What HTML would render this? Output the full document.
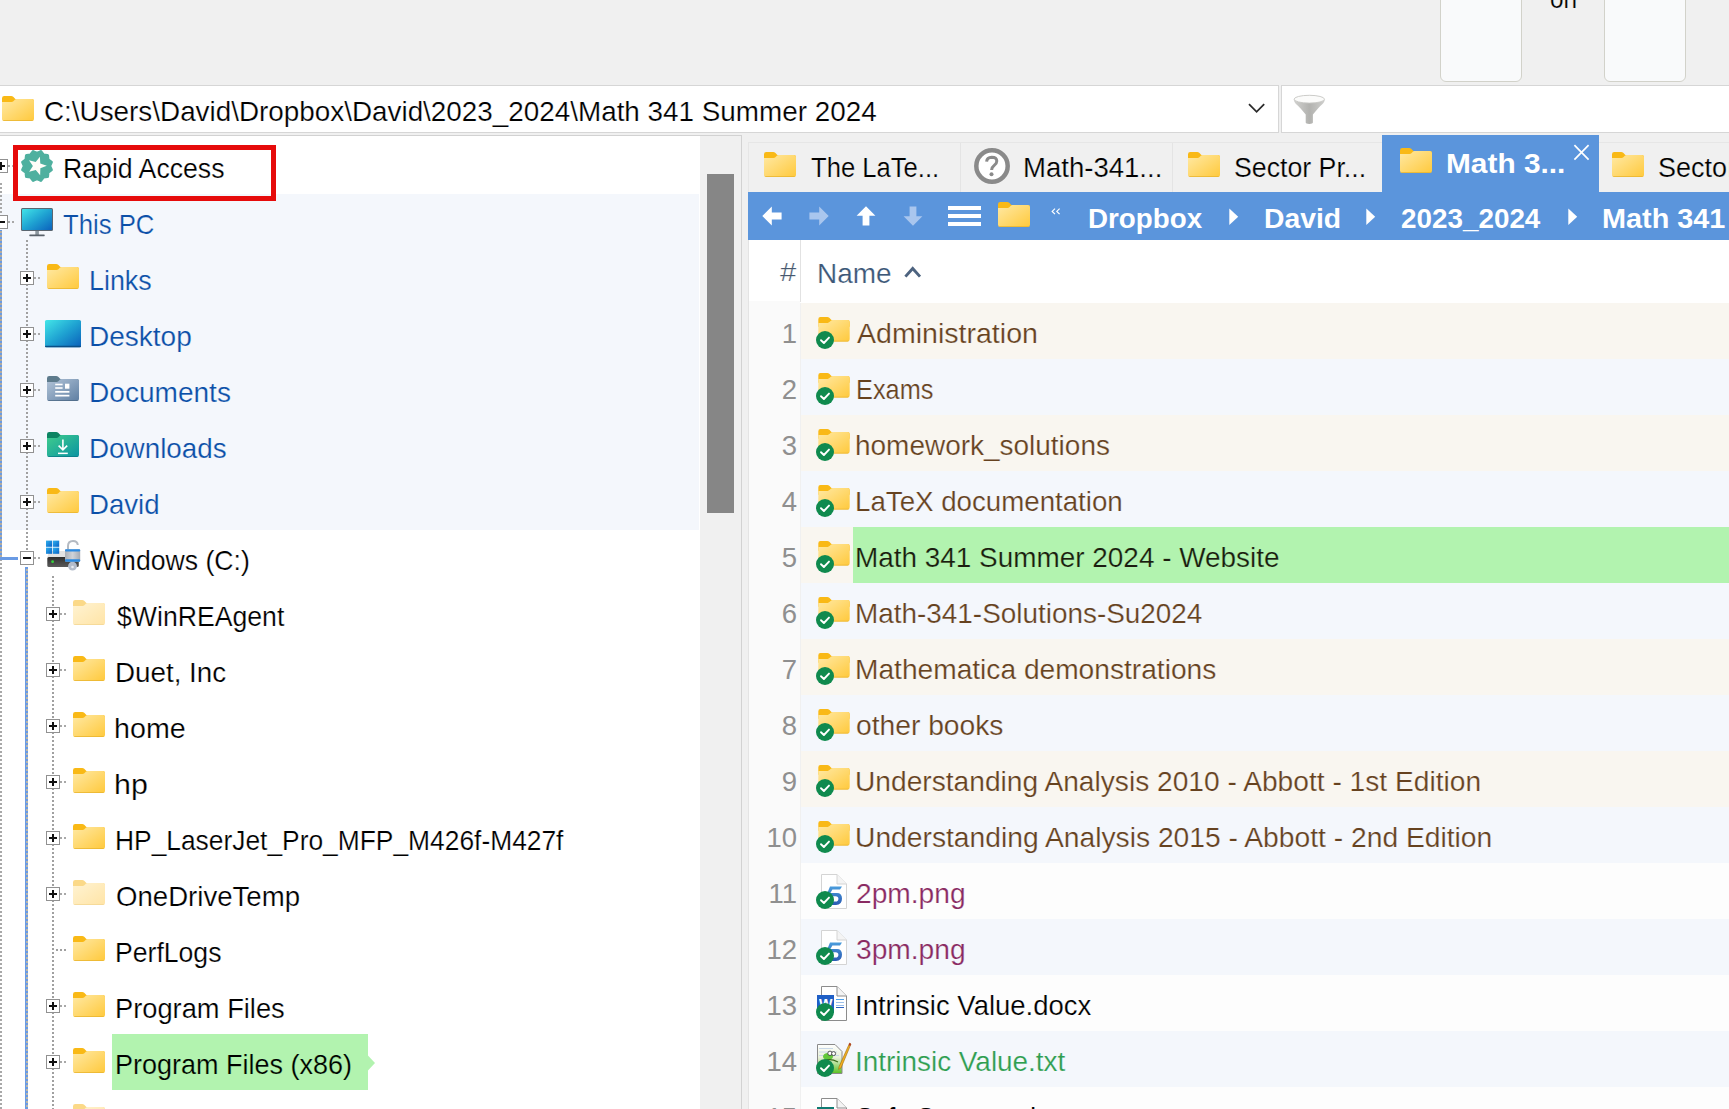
<!DOCTYPE html><html><head><meta charset="utf-8"><title>XYplorer</title><style>
html,body{margin:0;padding:0}body{width:1729px;height:1109px;overflow:hidden;background:#f0f0f0;position:relative;font-family:'Liberation Sans', sans-serif}
.t{position:absolute;white-space:pre;transform-origin:0 0}
#root{position:absolute;left:0;top:0;width:1729px;height:1109px;overflow:hidden}
</style></head><body><div id="root">
<div style="position:absolute;left:1440px;top:-10px;width:80px;height:90px;border:1px solid #d2d2ca;border-radius:6px;background:#f9fafb"></div>
<div style="position:absolute;left:1604px;top:-10px;width:80px;height:90px;border:1px solid #d2d2ca;border-radius:6px;background:#f9fafb"></div>
<div style="position:absolute;left:-1px;top:85px;width:1278px;height:46px;border:1px solid #d6d6d6;background:#fff"></div>
<div style="position:absolute;left:1281px;top:85px;width:500px;height:46px;border:1px solid #d6d6d6;background:#fff"></div>
<svg style="position:absolute;left:2px;top:95.5px" width="32" height="25" viewBox="0 0 32 25"><defs><linearGradient id="fg1" x1="0" y1="0" x2="1" y2="1"><stop offset="0" stop-color="#ffe9a4"/><stop offset="1" stop-color="#ffc93c"/></linearGradient></defs><path d="M0 2.2Q0 0 2.2 0H9.2Q10.4 0 11.2 .8L13.4 3H29.8Q32 3 32 5.2V10H0Z" fill="#f9b916"/><path d="M0 6H9.6Q10.6 6 11.4 5.2L12.8 3.8Q13.6 3 14.6 3H29.8Q32 3 32 5.2V22.8Q32 25 29.8 25H2.2Q0 25 0 22.8Z" fill="url(#fg1)"/><path d="M0.3 23.6Q.8 25 2.2 25H29.8Q31.2 25 31.7 23.6Q31 24.2 29.8 24.2H2.2Q1 24.2 .3 23.6Z" fill="#e9b42e"/></svg>
<svg style="position:absolute;left:1246px;top:101px" width="22" height="14" viewBox="0 0 22 14"><path d="M3 3.2L10.6 10.8L18.2 3.2" fill="none" stroke="#2b2b2b" stroke-width="1.8"/></svg>
<svg style="position:absolute;left:1292px;top:94px" width="34" height="31" viewBox="0 0 34 31"><defs><linearGradient id="fn" x1="0" y1="0" x2="1" y2="0"><stop offset="0" stop-color="#d2d2d0"/><stop offset=".5" stop-color="#b2b2af"/><stop offset="1" stop-color="#cfcfcd"/></linearGradient></defs><path d="M1.8 5.5C1.8 9 5.5 10.8 8.6 14.4L13.7 20.4V28.6Q13.7 30 17.3 30Q20.9 30 20.9 28.6V20.4L26 14.4C29.1 10.8 32.8 9 32.8 5.5Z" fill="url(#fn)"/><ellipse cx="17.3" cy="5.2" rx="15.2" ry="3.9" fill="#fbfbfa" stroke="#c6c6c3" stroke-width=".9"/></svg>
<div style="position:absolute;left:0px;top:135px;width:742px;height:1px;background:#d2d2d2;"></div>
<div style="position:absolute;left:741px;top:135px;width:1px;height:980px;background:#d2d2d2;"></div>
<div style="position:absolute;left:0px;top:136px;width:700px;height:980px;background:#fff;"></div>
<div style="position:absolute;left:0px;top:194px;width:699px;height:336px;background:#f4f7fc;"></div>
<div style="position:absolute;left:707px;top:174px;width:27px;height:339px;background:#868686;"></div>
<div style="position:absolute;left:0px;top:183px;width:2px;height:926px;background:repeating-linear-gradient(to bottom,#a8a8a8 0,#a8a8a8 2px,transparent 2px,transparent 4px)"></div>
<div style="position:absolute;left:0px;top:230px;width:2px;height:330px;background:#6a9be4;"></div>
<div style="position:absolute;left:0px;top:231px;width:2px;height:326px;background:repeating-linear-gradient(to bottom,#b4ab9c 0,#b4ab9c 2px,transparent 2px,transparent 4px)"></div>
<div style="position:absolute;left:0px;top:557px;width:18px;height:3px;background:#6a9be4;"></div>
<div style="position:absolute;left:26px;top:240px;width:2px;height:311px;background:repeating-linear-gradient(to bottom,#a0a0a0 0,#a0a0a0 2px,transparent 2px,transparent 4px)"></div>
<div style="position:absolute;left:25px;top:567px;width:3px;height:560px;background:#6a9be4;"></div>
<div style="position:absolute;left:26px;top:569px;width:2px;height:540px;background:repeating-linear-gradient(to bottom,#bcb6a8 0,#bcb6a8 2px,transparent 2px,transparent 4px)"></div>
<div style="position:absolute;left:52px;top:576px;width:2px;height:533px;background:repeating-linear-gradient(to bottom,#a0a0a0 0,#a0a0a0 2px,transparent 2px,transparent 4px)"></div>
<div style="position:absolute;left:13px;top:145px;width:253px;height:46px;border:5px solid #e60b0b"></div>
<div style="position:absolute;left:-6px;top:159px;width:12px;height:12px;border:1px solid #919191;background:#fff"></div>
<div style="position:absolute;left:-3px;top:165px;width:8px;height:2px;background:#111;"></div>
<div style="position:absolute;left:0px;top:162px;width:2px;height:8px;background:#111;"></div>
<div style="position:absolute;left:8px;top:165px;width:1.8px;height:2px;background:#a8a8a8;"></div>
<div style="position:absolute;left:12px;top:165px;width:1px;height:2px;background:#b8b8b8;"></div>
<svg style="position:absolute;left:19px;top:148px" width="36" height="36" viewBox="0 0 36 36"><polygon points="21.86,3.61 24.35,7.00 28.54,7.46 29.00,11.65 32.39,14.14 30.70,18.00 32.39,21.86 29.00,24.35 28.54,28.54 24.35,29.00 21.86,32.39 18.00,30.70 14.14,32.39 11.65,29.00 7.46,28.54 7.00,24.35 3.61,21.86 5.30,18.00 3.61,14.14 7.00,11.65 7.46,7.46 11.65,7.00 14.14,3.61 18.00,5.30" fill="#4fb09f" stroke="#4fb09f" stroke-width="3" stroke-linejoin="round"/><polygon points="20.90,8.64 21.28,15.54 27.80,17.86 21.35,20.36 21.16,27.28 16.79,21.92 10.15,23.87 13.90,18.06 9.99,12.35 16.68,14.12" fill="#fffdf8"/></svg>
<div style="position:absolute;left:-6px;top:215px;width:12px;height:12px;border:1px solid #919191;background:#fff"></div>
<div style="position:absolute;left:-3px;top:221px;width:8px;height:2px;background:#111;"></div>
<div style="position:absolute;left:8px;top:221px;width:1.8px;height:2px;background:#a8a8a8;"></div>
<div style="position:absolute;left:12px;top:221px;width:1.8px;height:2px;background:#a8a8a8;"></div>
<svg style="position:absolute;left:20px;top:207px" width="34" height="30" viewBox="0 0 34 30"><defs><linearGradient id="pc" x1="0" y1="0" x2="1" y2="1"><stop offset="0" stop-color="#42e4e8"/><stop offset=".5" stop-color="#1fa3d2"/><stop offset="1" stop-color="#0b62bd"/></linearGradient></defs><rect x="1" y="1" width="32" height="23" rx="1.5" fill="#5b6670"/><rect x="2" y="2" width="30" height="21" rx=".8" fill="url(#pc)"/><rect x="15.3" y="24" width="3.6" height="4" fill="#8d979f"/><rect x="9.3" y="27.6" width="15.4" height="1.6" rx=".6" fill="#59626b"/></svg>
<div style="position:absolute;left:20px;top:271px;width:12px;height:12px;border:1px solid #919191;background:#fff"></div>
<div style="position:absolute;left:23px;top:277px;width:8px;height:2px;background:#111;"></div>
<div style="position:absolute;left:26px;top:274px;width:2px;height:8px;background:#111;"></div>
<div style="position:absolute;left:34.3px;top:277px;width:1.7px;height:2px;background:#a8a8a8;"></div>
<div style="position:absolute;left:38px;top:277px;width:1.8px;height:2px;background:#a8a8a8;"></div>
<div style="position:absolute;left:20px;top:327px;width:12px;height:12px;border:1px solid #919191;background:#fff"></div>
<div style="position:absolute;left:23px;top:333px;width:8px;height:2px;background:#111;"></div>
<div style="position:absolute;left:26px;top:330px;width:2px;height:8px;background:#111;"></div>
<div style="position:absolute;left:34.3px;top:333px;width:1.7px;height:2px;background:#a8a8a8;"></div>
<div style="position:absolute;left:38px;top:333px;width:1.8px;height:2px;background:#a8a8a8;"></div>
<div style="position:absolute;left:20px;top:383px;width:12px;height:12px;border:1px solid #919191;background:#fff"></div>
<div style="position:absolute;left:23px;top:389px;width:8px;height:2px;background:#111;"></div>
<div style="position:absolute;left:26px;top:386px;width:2px;height:8px;background:#111;"></div>
<div style="position:absolute;left:34.3px;top:389px;width:1.7px;height:2px;background:#a8a8a8;"></div>
<div style="position:absolute;left:38px;top:389px;width:1.8px;height:2px;background:#a8a8a8;"></div>
<div style="position:absolute;left:20px;top:439px;width:12px;height:12px;border:1px solid #919191;background:#fff"></div>
<div style="position:absolute;left:23px;top:445px;width:8px;height:2px;background:#111;"></div>
<div style="position:absolute;left:26px;top:442px;width:2px;height:8px;background:#111;"></div>
<div style="position:absolute;left:34.3px;top:445px;width:1.7px;height:2px;background:#a8a8a8;"></div>
<div style="position:absolute;left:38px;top:445px;width:1.8px;height:2px;background:#a8a8a8;"></div>
<div style="position:absolute;left:20px;top:495px;width:12px;height:12px;border:1px solid #919191;background:#fff"></div>
<div style="position:absolute;left:23px;top:501px;width:8px;height:2px;background:#111;"></div>
<div style="position:absolute;left:26px;top:498px;width:2px;height:8px;background:#111;"></div>
<div style="position:absolute;left:34.3px;top:501px;width:1.7px;height:2px;background:#a8a8a8;"></div>
<div style="position:absolute;left:38px;top:501px;width:1.8px;height:2px;background:#a8a8a8;"></div>
<svg style="position:absolute;left:47px;top:264px" width="32" height="25" viewBox="0 0 32 25"><defs><linearGradient id="fg2" x1="0" y1="0" x2="1" y2="1"><stop offset="0" stop-color="#ffe9a4"/><stop offset="1" stop-color="#ffc93c"/></linearGradient></defs><path d="M0 2.2Q0 0 2.2 0H9.2Q10.4 0 11.2 .8L13.4 3H29.8Q32 3 32 5.2V10H0Z" fill="#f9b916"/><path d="M0 6H9.6Q10.6 6 11.4 5.2L12.8 3.8Q13.6 3 14.6 3H29.8Q32 3 32 5.2V22.8Q32 25 29.8 25H2.2Q0 25 0 22.8Z" fill="url(#fg2)"/><path d="M0.3 23.6Q.8 25 2.2 25H29.8Q31.2 25 31.7 23.6Q31 24.2 29.8 24.2H2.2Q1 24.2 .3 23.6Z" fill="#e9b42e"/></svg>
<svg style="position:absolute;left:44px;top:319px" width="38" height="30" viewBox="0 0 38 30"><defs><linearGradient id="dk" x1="0" y1="0" x2="1" y2="1"><stop offset="0" stop-color="#43e6e8"/><stop offset=".5" stop-color="#1fa3d2"/><stop offset="1" stop-color="#0a5fba"/></linearGradient></defs><rect x="1" y="1" width="36" height="27.3" rx="1.6" fill="url(#dk)"/><rect x="1" y="26.8" width="36" height="1.5" rx=".7" fill="#0b4f86"/></svg>
<svg style="position:absolute;left:47px;top:376px" width="32" height="25" viewBox="0 0 32 25"><defs><linearGradient id="dc" x1="0" y1="0" x2="1" y2="1"><stop offset="0" stop-color="#b2c4d8"/><stop offset="1" stop-color="#5f7fa2"/></linearGradient></defs><path d="M0 2.2Q0 0 2.2 0H9.2Q10.4 0 11.2 .8L13.4 3H29.8Q32 3 32 5.2V10H0Z" fill="#5d7b8c"/><path d="M0 6H9.6Q10.6 6 11.4 5.2L12.8 3.8Q13.6 3 14.6 3H29.8Q32 3 32 5.2V22.8Q32 25 29.8 25H2.2Q0 25 0 22.8Z" fill="url(#dc)"/><path d="M0.3 23.6Q.8 25 2.2 25H29.8Q31.2 25 31.7 23.6Q31 24.2 29.8 24.2H2.2Q1 24.2 .3 23.6Z" fill="#4c6884"/><rect x="8.2" y="7.7" width="7.4" height="1.6" fill="#fff"/><rect x="8.2" y="11.2" width="7.4" height="1.6" fill="#fff"/><rect x="18" y="7.7" width="4.4" height="5" fill="#fff"/><rect x="8.2" y="15" width="14.2" height="1.7" fill="#fff"/><rect x="8.2" y="18.8" width="14.2" height="1.7" fill="#fff"/></svg>
<svg style="position:absolute;left:47px;top:432px" width="32" height="25" viewBox="0 0 32 25"><defs><linearGradient id="dl" x1="0" y1="0" x2="1" y2="1"><stop offset="0" stop-color="#40cd8c"/><stop offset="1" stop-color="#0a93a2"/></linearGradient></defs><path d="M0 2.2Q0 0 2.2 0H9.2Q10.4 0 11.2 .8L13.4 3H29.8Q32 3 32 5.2V10H0Z" fill="#0c8462"/><path d="M0 6H9.6Q10.6 6 11.4 5.2L12.8 3.8Q13.6 3 14.6 3H29.8Q32 3 32 5.2V22.8Q32 25 29.8 25H2.2Q0 25 0 22.8Z" fill="url(#dl)"/><path d="M0.3 23.6Q.8 25 2.2 25H29.8Q31.2 25 31.7 23.6Q31 24.2 29.8 24.2H2.2Q1 24.2 .3 23.6Z" fill="#0a7a84"/><path d="M15.9 7.4V17.6M11.6 13.6L15.9 17.8L20.2 13.6" fill="none" stroke="#fff" stroke-width="1.6"/><rect x="11" y="20.6" width="9.8" height="1.5" fill="#fff"/></svg>
<svg style="position:absolute;left:47px;top:488px" width="32" height="25" viewBox="0 0 32 25"><defs><linearGradient id="fg3" x1="0" y1="0" x2="1" y2="1"><stop offset="0" stop-color="#ffe9a4"/><stop offset="1" stop-color="#ffc93c"/></linearGradient></defs><path d="M0 2.2Q0 0 2.2 0H9.2Q10.4 0 11.2 .8L13.4 3H29.8Q32 3 32 5.2V10H0Z" fill="#f9b916"/><path d="M0 6H9.6Q10.6 6 11.4 5.2L12.8 3.8Q13.6 3 14.6 3H29.8Q32 3 32 5.2V22.8Q32 25 29.8 25H2.2Q0 25 0 22.8Z" fill="url(#fg3)"/><path d="M0.3 23.6Q.8 25 2.2 25H29.8Q31.2 25 31.7 23.6Q31 24.2 29.8 24.2H2.2Q1 24.2 .3 23.6Z" fill="#e9b42e"/></svg>
<div style="position:absolute;left:20px;top:551px;width:12px;height:12px;border:1px solid #919191;background:#fff"></div>
<div style="position:absolute;left:23px;top:557px;width:8px;height:2px;background:#111;"></div>
<div style="position:absolute;left:34.3px;top:557px;width:1.7px;height:2px;background:#a8a8a8;"></div>
<div style="position:absolute;left:38px;top:557px;width:1.8px;height:2px;background:#a8a8a8;"></div>
<svg style="position:absolute;left:45px;top:539px" width="37" height="32" viewBox="0 0 37 32"><defs><linearGradient id="wn" x1="0" y1="0" x2="1" y2="1"><stop offset="0" stop-color="#2fb0ee"/><stop offset="1" stop-color="#0862c6"/></linearGradient><linearGradient id="hd" x1="0" y1="0" x2="0" y2="1"><stop offset="0" stop-color="#2e2e2e"/><stop offset="1" stop-color="#5a5a5a"/></linearGradient><linearGradient id="lk" x1="0" y1="0" x2="1" y2="0"><stop offset="0" stop-color="#a9aeb6"/><stop offset=".5" stop-color="#d0d3d8"/><stop offset="1" stop-color="#a4a9b2"/></linearGradient></defs><path d="M4 12L20 12L34 18.5H2.3Z" fill="#e3e3e3"/><rect x="2.3" y="18" width="31.5" height="10" rx="1.5" fill="url(#hd)"/><circle cx="7.6" cy="22.7" r="1.4" fill="#35d23c"/><rect x="1" y="1.6" width="6.2" height="6.2" fill="url(#wn)"/><rect x="8" y="1.6" width="6.2" height="6.2" fill="url(#wn)"/><rect x="1" y="8.6" width="6.2" height="6.2" fill="url(#wn)"/><rect x="8" y="8.6" width="6.2" height="6.2" fill="url(#wn)"/><path d="M23 10.5V7Q23 2 28 2Q32.4 2 32.8 6" fill="none" stroke="#b4bac2" stroke-width="2"/><circle cx="27.5" cy="27.2" r="4.4" fill="#b3bccb"/><circle cx="27.5" cy="28" r="1.3" fill="#e8ecf2"/><rect x="20" y="10.3" width="15.2" height="12.4" rx="1.2" fill="url(#lk)"/><rect x="20" y="10.3" width="15.2" height="2.2" rx="1" fill="#2b8ae2"/><rect x="20" y="20.2" width="15.2" height="2.5" rx="1" fill="#2b8ae2"/></svg>
<div style="position:absolute;left:46px;top:607px;width:12px;height:12px;border:1px solid #919191;background:#fff"></div>
<div style="position:absolute;left:49px;top:613px;width:8px;height:2px;background:#111;"></div>
<div style="position:absolute;left:52px;top:610px;width:2px;height:8px;background:#111;"></div>
<div style="position:absolute;left:60.3px;top:613px;width:1.7px;height:2px;background:#a8a8a8;"></div>
<div style="position:absolute;left:64px;top:613px;width:1.8px;height:2px;background:#a8a8a8;"></div>
<svg style="position:absolute;left:73px;top:600px" width="32" height="25" viewBox="0 0 32 25"><defs><linearGradient id="fg4" x1="0" y1="0" x2="1" y2="1"><stop offset="0" stop-color="#fff3d2"/><stop offset="1" stop-color="#ffe4a6"/></linearGradient></defs><path d="M0 2.2Q0 0 2.2 0H9.2Q10.4 0 11.2 .8L13.4 3H29.8Q32 3 32 5.2V10H0Z" fill="#fbd988"/><path d="M0 6H9.6Q10.6 6 11.4 5.2L12.8 3.8Q13.6 3 14.6 3H29.8Q32 3 32 5.2V22.8Q32 25 29.8 25H2.2Q0 25 0 22.8Z" fill="url(#fg4)"/><path d="M0.3 23.6Q.8 25 2.2 25H29.8Q31.2 25 31.7 23.6Q31 24.2 29.8 24.2H2.2Q1 24.2 .3 23.6Z" fill="#f3d693"/></svg>
<div style="position:absolute;left:46px;top:663px;width:12px;height:12px;border:1px solid #919191;background:#fff"></div>
<div style="position:absolute;left:49px;top:669px;width:8px;height:2px;background:#111;"></div>
<div style="position:absolute;left:52px;top:666px;width:2px;height:8px;background:#111;"></div>
<div style="position:absolute;left:60.3px;top:669px;width:1.7px;height:2px;background:#a8a8a8;"></div>
<div style="position:absolute;left:64px;top:669px;width:1.8px;height:2px;background:#a8a8a8;"></div>
<svg style="position:absolute;left:73px;top:656px" width="32" height="25" viewBox="0 0 32 25"><defs><linearGradient id="fg5" x1="0" y1="0" x2="1" y2="1"><stop offset="0" stop-color="#ffe9a4"/><stop offset="1" stop-color="#ffc93c"/></linearGradient></defs><path d="M0 2.2Q0 0 2.2 0H9.2Q10.4 0 11.2 .8L13.4 3H29.8Q32 3 32 5.2V10H0Z" fill="#f9b916"/><path d="M0 6H9.6Q10.6 6 11.4 5.2L12.8 3.8Q13.6 3 14.6 3H29.8Q32 3 32 5.2V22.8Q32 25 29.8 25H2.2Q0 25 0 22.8Z" fill="url(#fg5)"/><path d="M0.3 23.6Q.8 25 2.2 25H29.8Q31.2 25 31.7 23.6Q31 24.2 29.8 24.2H2.2Q1 24.2 .3 23.6Z" fill="#e9b42e"/></svg>
<div style="position:absolute;left:46px;top:719px;width:12px;height:12px;border:1px solid #919191;background:#fff"></div>
<div style="position:absolute;left:49px;top:725px;width:8px;height:2px;background:#111;"></div>
<div style="position:absolute;left:52px;top:722px;width:2px;height:8px;background:#111;"></div>
<div style="position:absolute;left:60.3px;top:725px;width:1.7px;height:2px;background:#a8a8a8;"></div>
<div style="position:absolute;left:64px;top:725px;width:1.8px;height:2px;background:#a8a8a8;"></div>
<svg style="position:absolute;left:73px;top:712px" width="32" height="25" viewBox="0 0 32 25"><defs><linearGradient id="fg6" x1="0" y1="0" x2="1" y2="1"><stop offset="0" stop-color="#ffe9a4"/><stop offset="1" stop-color="#ffc93c"/></linearGradient></defs><path d="M0 2.2Q0 0 2.2 0H9.2Q10.4 0 11.2 .8L13.4 3H29.8Q32 3 32 5.2V10H0Z" fill="#f9b916"/><path d="M0 6H9.6Q10.6 6 11.4 5.2L12.8 3.8Q13.6 3 14.6 3H29.8Q32 3 32 5.2V22.8Q32 25 29.8 25H2.2Q0 25 0 22.8Z" fill="url(#fg6)"/><path d="M0.3 23.6Q.8 25 2.2 25H29.8Q31.2 25 31.7 23.6Q31 24.2 29.8 24.2H2.2Q1 24.2 .3 23.6Z" fill="#e9b42e"/></svg>
<div style="position:absolute;left:46px;top:775px;width:12px;height:12px;border:1px solid #919191;background:#fff"></div>
<div style="position:absolute;left:49px;top:781px;width:8px;height:2px;background:#111;"></div>
<div style="position:absolute;left:52px;top:778px;width:2px;height:8px;background:#111;"></div>
<div style="position:absolute;left:60.3px;top:781px;width:1.7px;height:2px;background:#a8a8a8;"></div>
<div style="position:absolute;left:64px;top:781px;width:1.8px;height:2px;background:#a8a8a8;"></div>
<svg style="position:absolute;left:73px;top:768px" width="32" height="25" viewBox="0 0 32 25"><defs><linearGradient id="fg7" x1="0" y1="0" x2="1" y2="1"><stop offset="0" stop-color="#ffe9a4"/><stop offset="1" stop-color="#ffc93c"/></linearGradient></defs><path d="M0 2.2Q0 0 2.2 0H9.2Q10.4 0 11.2 .8L13.4 3H29.8Q32 3 32 5.2V10H0Z" fill="#f9b916"/><path d="M0 6H9.6Q10.6 6 11.4 5.2L12.8 3.8Q13.6 3 14.6 3H29.8Q32 3 32 5.2V22.8Q32 25 29.8 25H2.2Q0 25 0 22.8Z" fill="url(#fg7)"/><path d="M0.3 23.6Q.8 25 2.2 25H29.8Q31.2 25 31.7 23.6Q31 24.2 29.8 24.2H2.2Q1 24.2 .3 23.6Z" fill="#e9b42e"/></svg>
<div style="position:absolute;left:46px;top:831px;width:12px;height:12px;border:1px solid #919191;background:#fff"></div>
<div style="position:absolute;left:49px;top:837px;width:8px;height:2px;background:#111;"></div>
<div style="position:absolute;left:52px;top:834px;width:2px;height:8px;background:#111;"></div>
<div style="position:absolute;left:60.3px;top:837px;width:1.7px;height:2px;background:#a8a8a8;"></div>
<div style="position:absolute;left:64px;top:837px;width:1.8px;height:2px;background:#a8a8a8;"></div>
<svg style="position:absolute;left:73px;top:824px" width="32" height="25" viewBox="0 0 32 25"><defs><linearGradient id="fg8" x1="0" y1="0" x2="1" y2="1"><stop offset="0" stop-color="#ffe9a4"/><stop offset="1" stop-color="#ffc93c"/></linearGradient></defs><path d="M0 2.2Q0 0 2.2 0H9.2Q10.4 0 11.2 .8L13.4 3H29.8Q32 3 32 5.2V10H0Z" fill="#f9b916"/><path d="M0 6H9.6Q10.6 6 11.4 5.2L12.8 3.8Q13.6 3 14.6 3H29.8Q32 3 32 5.2V22.8Q32 25 29.8 25H2.2Q0 25 0 22.8Z" fill="url(#fg8)"/><path d="M0.3 23.6Q.8 25 2.2 25H29.8Q31.2 25 31.7 23.6Q31 24.2 29.8 24.2H2.2Q1 24.2 .3 23.6Z" fill="#e9b42e"/></svg>
<div style="position:absolute;left:46px;top:887px;width:12px;height:12px;border:1px solid #919191;background:#fff"></div>
<div style="position:absolute;left:49px;top:893px;width:8px;height:2px;background:#111;"></div>
<div style="position:absolute;left:52px;top:890px;width:2px;height:8px;background:#111;"></div>
<div style="position:absolute;left:60.3px;top:893px;width:1.7px;height:2px;background:#a8a8a8;"></div>
<div style="position:absolute;left:64px;top:893px;width:1.8px;height:2px;background:#a8a8a8;"></div>
<svg style="position:absolute;left:73px;top:880px" width="32" height="25" viewBox="0 0 32 25"><defs><linearGradient id="fg9" x1="0" y1="0" x2="1" y2="1"><stop offset="0" stop-color="#fff3d2"/><stop offset="1" stop-color="#ffe4a6"/></linearGradient></defs><path d="M0 2.2Q0 0 2.2 0H9.2Q10.4 0 11.2 .8L13.4 3H29.8Q32 3 32 5.2V10H0Z" fill="#fbd988"/><path d="M0 6H9.6Q10.6 6 11.4 5.2L12.8 3.8Q13.6 3 14.6 3H29.8Q32 3 32 5.2V22.8Q32 25 29.8 25H2.2Q0 25 0 22.8Z" fill="url(#fg9)"/><path d="M0.3 23.6Q.8 25 2.2 25H29.8Q31.2 25 31.7 23.6Q31 24.2 29.8 24.2H2.2Q1 24.2 .3 23.6Z" fill="#f3d693"/></svg>
<div style="position:absolute;left:56px;top:949px;width:2px;height:2px;background:#a0a0a0;"></div>
<div style="position:absolute;left:60px;top:949px;width:2px;height:2px;background:#a0a0a0;"></div>
<div style="position:absolute;left:64px;top:949px;width:2px;height:2px;background:#a0a0a0;"></div>
<svg style="position:absolute;left:73px;top:936px" width="32" height="25" viewBox="0 0 32 25"><defs><linearGradient id="fg10" x1="0" y1="0" x2="1" y2="1"><stop offset="0" stop-color="#ffe9a4"/><stop offset="1" stop-color="#ffc93c"/></linearGradient></defs><path d="M0 2.2Q0 0 2.2 0H9.2Q10.4 0 11.2 .8L13.4 3H29.8Q32 3 32 5.2V10H0Z" fill="#f9b916"/><path d="M0 6H9.6Q10.6 6 11.4 5.2L12.8 3.8Q13.6 3 14.6 3H29.8Q32 3 32 5.2V22.8Q32 25 29.8 25H2.2Q0 25 0 22.8Z" fill="url(#fg10)"/><path d="M0.3 23.6Q.8 25 2.2 25H29.8Q31.2 25 31.7 23.6Q31 24.2 29.8 24.2H2.2Q1 24.2 .3 23.6Z" fill="#e9b42e"/></svg>
<div style="position:absolute;left:46px;top:999px;width:12px;height:12px;border:1px solid #919191;background:#fff"></div>
<div style="position:absolute;left:49px;top:1005px;width:8px;height:2px;background:#111;"></div>
<div style="position:absolute;left:52px;top:1002px;width:2px;height:8px;background:#111;"></div>
<div style="position:absolute;left:60.3px;top:1005px;width:1.7px;height:2px;background:#a8a8a8;"></div>
<div style="position:absolute;left:64px;top:1005px;width:1.8px;height:2px;background:#a8a8a8;"></div>
<svg style="position:absolute;left:73px;top:992px" width="32" height="25" viewBox="0 0 32 25"><defs><linearGradient id="fg11" x1="0" y1="0" x2="1" y2="1"><stop offset="0" stop-color="#ffe9a4"/><stop offset="1" stop-color="#ffc93c"/></linearGradient></defs><path d="M0 2.2Q0 0 2.2 0H9.2Q10.4 0 11.2 .8L13.4 3H29.8Q32 3 32 5.2V10H0Z" fill="#f9b916"/><path d="M0 6H9.6Q10.6 6 11.4 5.2L12.8 3.8Q13.6 3 14.6 3H29.8Q32 3 32 5.2V22.8Q32 25 29.8 25H2.2Q0 25 0 22.8Z" fill="url(#fg11)"/><path d="M0.3 23.6Q.8 25 2.2 25H29.8Q31.2 25 31.7 23.6Q31 24.2 29.8 24.2H2.2Q1 24.2 .3 23.6Z" fill="#e9b42e"/></svg>
<div style="position:absolute;left:46px;top:1055px;width:12px;height:12px;border:1px solid #919191;background:#fff"></div>
<div style="position:absolute;left:49px;top:1061px;width:8px;height:2px;background:#111;"></div>
<div style="position:absolute;left:52px;top:1058px;width:2px;height:8px;background:#111;"></div>
<div style="position:absolute;left:60.3px;top:1061px;width:1.7px;height:2px;background:#a8a8a8;"></div>
<div style="position:absolute;left:64px;top:1061px;width:1.8px;height:2px;background:#a8a8a8;"></div>
<svg style="position:absolute;left:73px;top:1048px" width="32" height="25" viewBox="0 0 32 25"><defs><linearGradient id="fg12" x1="0" y1="0" x2="1" y2="1"><stop offset="0" stop-color="#ffe9a4"/><stop offset="1" stop-color="#ffc93c"/></linearGradient></defs><path d="M0 2.2Q0 0 2.2 0H9.2Q10.4 0 11.2 .8L13.4 3H29.8Q32 3 32 5.2V10H0Z" fill="#f9b916"/><path d="M0 6H9.6Q10.6 6 11.4 5.2L12.8 3.8Q13.6 3 14.6 3H29.8Q32 3 32 5.2V22.8Q32 25 29.8 25H2.2Q0 25 0 22.8Z" fill="url(#fg12)"/><path d="M0.3 23.6Q.8 25 2.2 25H29.8Q31.2 25 31.7 23.6Q31 24.2 29.8 24.2H2.2Q1 24.2 .3 23.6Z" fill="#e9b42e"/></svg>
<div style="position:absolute;left:46px;top:1111px;width:12px;height:12px;border:1px solid #919191;background:#fff"></div>
<div style="position:absolute;left:49px;top:1117px;width:8px;height:2px;background:#111;"></div>
<div style="position:absolute;left:52px;top:1114px;width:2px;height:8px;background:#111;"></div>
<div style="position:absolute;left:60.3px;top:1117px;width:1.7px;height:2px;background:#a8a8a8;"></div>
<div style="position:absolute;left:64px;top:1117px;width:1.8px;height:2px;background:#a8a8a8;"></div>
<svg style="position:absolute;left:73px;top:1104px" width="32" height="25" viewBox="0 0 32 25"><defs><linearGradient id="fg13" x1="0" y1="0" x2="1" y2="1"><stop offset="0" stop-color="#fff3d2"/><stop offset="1" stop-color="#ffe4a6"/></linearGradient></defs><path d="M0 2.2Q0 0 2.2 0H9.2Q10.4 0 11.2 .8L13.4 3H29.8Q32 3 32 5.2V10H0Z" fill="#fbd988"/><path d="M0 6H9.6Q10.6 6 11.4 5.2L12.8 3.8Q13.6 3 14.6 3H29.8Q32 3 32 5.2V22.8Q32 25 29.8 25H2.2Q0 25 0 22.8Z" fill="url(#fg13)"/><path d="M0.3 23.6Q.8 25 2.2 25H29.8Q31.2 25 31.7 23.6Q31 24.2 29.8 24.2H2.2Q1 24.2 .3 23.6Z" fill="#f3d693"/></svg>
<div style="position:absolute;left:112px;top:1034px;width:256px;height:56px;background:#b2f3af;"></div>
<svg style="position:absolute;left:367.5px;top:1055px" width="8" height="16" viewBox="0 0 8 16"><path d="M0 0.5L7 8L0 15.5Z" fill="#b2f3af"/></svg>
<div style="position:absolute;left:748px;top:142px;width:981px;height:1px;background:#e6e6e6;"></div>
<div style="position:absolute;left:748px;top:142px;width:1px;height:50px;background:#e6e6e6;"></div>
<div style="position:absolute;left:960px;top:143px;width:1px;height:49px;background:#e4e4e4;"></div>
<div style="position:absolute;left:1172px;top:143px;width:1px;height:49px;background:#e4e4e4;"></div>
<div style="position:absolute;left:1382px;top:135px;width:217px;height:58px;background:#5b95dc;"></div>
<div style="position:absolute;left:748px;top:192px;width:981px;height:48px;background:#5b95dc;"></div>
<svg style="position:absolute;left:764px;top:152px" width="32" height="25" viewBox="0 0 32 25"><defs><linearGradient id="fg14" x1="0" y1="0" x2="1" y2="1"><stop offset="0" stop-color="#ffe9a4"/><stop offset="1" stop-color="#ffc93c"/></linearGradient></defs><path d="M0 2.2Q0 0 2.2 0H9.2Q10.4 0 11.2 .8L13.4 3H29.8Q32 3 32 5.2V10H0Z" fill="#f9b916"/><path d="M0 6H9.6Q10.6 6 11.4 5.2L12.8 3.8Q13.6 3 14.6 3H29.8Q32 3 32 5.2V22.8Q32 25 29.8 25H2.2Q0 25 0 22.8Z" fill="url(#fg14)"/><path d="M0.3 23.6Q.8 25 2.2 25H29.8Q31.2 25 31.7 23.6Q31 24.2 29.8 24.2H2.2Q1 24.2 .3 23.6Z" fill="#e9b42e"/></svg>
<svg style="position:absolute;left:973px;top:147px" width="38" height="38" viewBox="0 0 38 38"><circle cx="19" cy="19" r="15.7" fill="#fff" stroke="#8a8a8a" stroke-width="4.5"/><path d="M13.6 14.6Q14 10.4 18.8 10.2Q23.6 10.2 23.8 14Q23.8 16.4 21.2 18.4Q18.6 20.4 18.6 23" fill="none" stroke="#8a8a8a" stroke-width="3"/><circle cx="18.5" cy="27.3" r="2" fill="#8a8a8a"/></svg>
<svg style="position:absolute;left:1188px;top:152px" width="32" height="25" viewBox="0 0 32 25"><defs><linearGradient id="fg15" x1="0" y1="0" x2="1" y2="1"><stop offset="0" stop-color="#ffe9a4"/><stop offset="1" stop-color="#ffc93c"/></linearGradient></defs><path d="M0 2.2Q0 0 2.2 0H9.2Q10.4 0 11.2 .8L13.4 3H29.8Q32 3 32 5.2V10H0Z" fill="#f9b916"/><path d="M0 6H9.6Q10.6 6 11.4 5.2L12.8 3.8Q13.6 3 14.6 3H29.8Q32 3 32 5.2V22.8Q32 25 29.8 25H2.2Q0 25 0 22.8Z" fill="url(#fg15)"/><path d="M0.3 23.6Q.8 25 2.2 25H29.8Q31.2 25 31.7 23.6Q31 24.2 29.8 24.2H2.2Q1 24.2 .3 23.6Z" fill="#e9b42e"/></svg>
<svg style="position:absolute;left:1399.5px;top:148px" width="32" height="25" viewBox="0 0 32 25"><defs><linearGradient id="fg16" x1="0" y1="0" x2="1" y2="1"><stop offset="0" stop-color="#ffe9a4"/><stop offset="1" stop-color="#ffc93c"/></linearGradient></defs><path d="M0 2.2Q0 0 2.2 0H9.2Q10.4 0 11.2 .8L13.4 3H29.8Q32 3 32 5.2V10H0Z" fill="#f9b916"/><path d="M0 6H9.6Q10.6 6 11.4 5.2L12.8 3.8Q13.6 3 14.6 3H29.8Q32 3 32 5.2V22.8Q32 25 29.8 25H2.2Q0 25 0 22.8Z" fill="url(#fg16)"/><path d="M0.3 23.6Q.8 25 2.2 25H29.8Q31.2 25 31.7 23.6Q31 24.2 29.8 24.2H2.2Q1 24.2 .3 23.6Z" fill="#e9b42e"/></svg>
<svg style="position:absolute;left:1612px;top:152px" width="32" height="25" viewBox="0 0 32 25"><defs><linearGradient id="fg17" x1="0" y1="0" x2="1" y2="1"><stop offset="0" stop-color="#ffe9a4"/><stop offset="1" stop-color="#ffc93c"/></linearGradient></defs><path d="M0 2.2Q0 0 2.2 0H9.2Q10.4 0 11.2 .8L13.4 3H29.8Q32 3 32 5.2V10H0Z" fill="#f9b916"/><path d="M0 6H9.6Q10.6 6 11.4 5.2L12.8 3.8Q13.6 3 14.6 3H29.8Q32 3 32 5.2V22.8Q32 25 29.8 25H2.2Q0 25 0 22.8Z" fill="url(#fg17)"/><path d="M0.3 23.6Q.8 25 2.2 25H29.8Q31.2 25 31.7 23.6Q31 24.2 29.8 24.2H2.2Q1 24.2 .3 23.6Z" fill="#e9b42e"/></svg>
<svg style="position:absolute;left:1572px;top:143px" width="19" height="19" viewBox="0 0 19 19"><path d="M2.4 2.2L16.6 16.6M16.6 2.2L2.4 16.6" stroke="#fff" stroke-width="1.7" fill="none"/></svg>
<svg style="position:absolute;left:761.5px;top:206px" width="20" height="20" viewBox="0 0 20 20"><path d="M0.3 10L9.8 .6V6.6H19.6V13.4H9.8V19.4Z" fill="#fff"/></svg>
<svg style="position:absolute;left:808.5px;top:206px" width="20" height="20" viewBox="0 0 20 20"><path transform="translate(20,0) scale(-1,1)" d="M0.3 10L9.8 .6V6.6H19.6V13.4H9.8V19.4Z" fill="#a9c6ee"/></svg>
<svg style="position:absolute;left:855.5px;top:206px" width="20" height="20" viewBox="0 0 20 20"><path d="M10 .3L19.4 9.8H13.4V19.6H6.6V9.8H.6Z" fill="#fff"/></svg>
<svg style="position:absolute;left:902.5px;top:206px" width="20" height="20" viewBox="0 0 20 20"><path transform="translate(0,20) scale(1,-1)" d="M10 .3L19.4 9.8H13.4V19.6H6.6V9.8H.6Z" fill="#a9c6ee"/></svg>
<div style="position:absolute;left:947.5px;top:206px;width:33.5px;height:3.6px;background:#fff;"></div>
<div style="position:absolute;left:947.5px;top:214px;width:33.5px;height:3.6px;background:#fff;"></div>
<div style="position:absolute;left:947.5px;top:222px;width:33.5px;height:3.6px;background:#fff;"></div>
<svg style="position:absolute;left:997.5px;top:202px" width="32" height="25" viewBox="0 0 32 25"><defs><linearGradient id="fg18" x1="0" y1="0" x2="1" y2="1"><stop offset="0" stop-color="#ffe9a4"/><stop offset="1" stop-color="#ffc93c"/></linearGradient></defs><path d="M0 2.2Q0 0 2.2 0H9.2Q10.4 0 11.2 .8L13.4 3H29.8Q32 3 32 5.2V10H0Z" fill="#f9b916"/><path d="M0 6H9.6Q10.6 6 11.4 5.2L12.8 3.8Q13.6 3 14.6 3H29.8Q32 3 32 5.2V22.8Q32 25 29.8 25H2.2Q0 25 0 22.8Z" fill="url(#fg18)"/><path d="M0.3 23.6Q.8 25 2.2 25H29.8Q31.2 25 31.7 23.6Q31 24.2 29.8 24.2H2.2Q1 24.2 .3 23.6Z" fill="#e9b42e"/></svg>
<svg style="position:absolute;left:1051px;top:208px" width="10" height="7" viewBox="0 0 10 7"><path d="M4 .6L1.2 3.4L4 6.2M8.6 .6L5.8 3.4L8.6 6.2" fill="none" stroke="#fff" stroke-width="1.2"/></svg>
<svg style="position:absolute;left:1229px;top:208px" width="10" height="18" viewBox="0 0 10 18"><path d="M.3 .4L9.2 8.7L.3 17Z" fill="#fff"/></svg>
<svg style="position:absolute;left:1366.3px;top:208px" width="10" height="18" viewBox="0 0 10 18"><path d="M.3 .4L9.2 8.7L.3 17Z" fill="#fff"/></svg>
<svg style="position:absolute;left:1567.5px;top:208px" width="10" height="18" viewBox="0 0 10 18"><path d="M.3 .4L9.2 8.7L.3 17Z" fill="#fff"/></svg>
<div style="position:absolute;left:748px;top:240px;width:981px;height:63px;background:#fff;"></div>
<div style="position:absolute;left:748px;top:301px;width:52px;height:820px;background:#fafafa;"></div>
<div style="position:absolute;left:800px;top:240px;width:1px;height:62px;background:#e2e2e2;"></div>
<div style="position:absolute;left:801px;top:303px;width:930px;height:56px;background:#f9f6f0;"></div>
<div style="position:absolute;left:801px;top:359px;width:930px;height:56px;background:#f4f7fc;"></div>
<div style="position:absolute;left:801px;top:415px;width:930px;height:56px;background:#f9f6f0;"></div>
<div style="position:absolute;left:801px;top:471px;width:930px;height:56px;background:#f4f7fc;"></div>
<div style="position:absolute;left:801px;top:527px;width:930px;height:56px;background:#f9f6f0;"></div>
<div style="position:absolute;left:801px;top:583px;width:930px;height:56px;background:#f4f7fc;"></div>
<div style="position:absolute;left:801px;top:639px;width:930px;height:56px;background:#f9f6f0;"></div>
<div style="position:absolute;left:801px;top:695px;width:930px;height:56px;background:#f4f7fc;"></div>
<div style="position:absolute;left:801px;top:751px;width:930px;height:56px;background:#f9f6f0;"></div>
<div style="position:absolute;left:801px;top:807px;width:930px;height:56px;background:#f4f7fc;"></div>
<div style="position:absolute;left:801px;top:863px;width:930px;height:56px;background:#fdfdfd;"></div>
<div style="position:absolute;left:801px;top:919px;width:930px;height:56px;background:#f4f7fc;"></div>
<div style="position:absolute;left:801px;top:975px;width:930px;height:56px;background:#fdfdfd;"></div>
<div style="position:absolute;left:801px;top:1031px;width:930px;height:56px;background:#f4f7fc;"></div>
<div style="position:absolute;left:801px;top:1087px;width:930px;height:56px;background:#fdfdfd;"></div>
<div style="position:absolute;left:853px;top:527px;width:880px;height:56px;background:#b2f3af;"></div>
<div style="position:absolute;left:748px;top:240px;width:1px;height:900px;background:#e4e4e4;"></div>
<svg style="position:absolute;left:903px;top:265px" width="20" height="14" viewBox="0 0 20 14"><path d="M2.4 11.6L9.7 3.5L17 11.6" fill="none" stroke="#4d637f" stroke-width="2.9"/></svg>
<svg style="position:absolute;left:818px;top:317px" width="32" height="24.5" viewBox="0 0 32 25"><defs><linearGradient id="fg19" x1="0" y1="0" x2="1" y2="1"><stop offset="0" stop-color="#ffe9a4"/><stop offset="1" stop-color="#ffc93c"/></linearGradient></defs><path d="M0 2.2Q0 0 2.2 0H9.2Q10.4 0 11.2 .8L13.4 3H29.8Q32 3 32 5.2V10H0Z" fill="#f9b916"/><path d="M0 6H9.6Q10.6 6 11.4 5.2L12.8 3.8Q13.6 3 14.6 3H29.8Q32 3 32 5.2V22.8Q32 25 29.8 25H2.2Q0 25 0 22.8Z" fill="url(#fg19)"/><path d="M0.3 23.6Q.8 25 2.2 25H29.8Q31.2 25 31.7 23.6Q31 24.2 29.8 24.2H2.2Q1 24.2 .3 23.6Z" fill="#e9b42e"/></svg>
<svg style="position:absolute;left:816px;top:331px" width="18" height="18" viewBox="0 0 18 18"><circle cx="9" cy="9" r="9" fill="#0f8a4e"/><path d="M5 9.2L7.9 12L13 6.6" fill="none" stroke="#fff" stroke-width="1.9" stroke-linecap="round" stroke-linejoin="round"/></svg>
<svg style="position:absolute;left:818px;top:373px" width="32" height="24.5" viewBox="0 0 32 25"><defs><linearGradient id="fg20" x1="0" y1="0" x2="1" y2="1"><stop offset="0" stop-color="#ffe9a4"/><stop offset="1" stop-color="#ffc93c"/></linearGradient></defs><path d="M0 2.2Q0 0 2.2 0H9.2Q10.4 0 11.2 .8L13.4 3H29.8Q32 3 32 5.2V10H0Z" fill="#f9b916"/><path d="M0 6H9.6Q10.6 6 11.4 5.2L12.8 3.8Q13.6 3 14.6 3H29.8Q32 3 32 5.2V22.8Q32 25 29.8 25H2.2Q0 25 0 22.8Z" fill="url(#fg20)"/><path d="M0.3 23.6Q.8 25 2.2 25H29.8Q31.2 25 31.7 23.6Q31 24.2 29.8 24.2H2.2Q1 24.2 .3 23.6Z" fill="#e9b42e"/></svg>
<svg style="position:absolute;left:816px;top:387px" width="18" height="18" viewBox="0 0 18 18"><circle cx="9" cy="9" r="9" fill="#0f8a4e"/><path d="M5 9.2L7.9 12L13 6.6" fill="none" stroke="#fff" stroke-width="1.9" stroke-linecap="round" stroke-linejoin="round"/></svg>
<svg style="position:absolute;left:818px;top:429px" width="32" height="24.5" viewBox="0 0 32 25"><defs><linearGradient id="fg21" x1="0" y1="0" x2="1" y2="1"><stop offset="0" stop-color="#ffe9a4"/><stop offset="1" stop-color="#ffc93c"/></linearGradient></defs><path d="M0 2.2Q0 0 2.2 0H9.2Q10.4 0 11.2 .8L13.4 3H29.8Q32 3 32 5.2V10H0Z" fill="#f9b916"/><path d="M0 6H9.6Q10.6 6 11.4 5.2L12.8 3.8Q13.6 3 14.6 3H29.8Q32 3 32 5.2V22.8Q32 25 29.8 25H2.2Q0 25 0 22.8Z" fill="url(#fg21)"/><path d="M0.3 23.6Q.8 25 2.2 25H29.8Q31.2 25 31.7 23.6Q31 24.2 29.8 24.2H2.2Q1 24.2 .3 23.6Z" fill="#e9b42e"/></svg>
<svg style="position:absolute;left:816px;top:443px" width="18" height="18" viewBox="0 0 18 18"><circle cx="9" cy="9" r="9" fill="#0f8a4e"/><path d="M5 9.2L7.9 12L13 6.6" fill="none" stroke="#fff" stroke-width="1.9" stroke-linecap="round" stroke-linejoin="round"/></svg>
<svg style="position:absolute;left:818px;top:485px" width="32" height="24.5" viewBox="0 0 32 25"><defs><linearGradient id="fg22" x1="0" y1="0" x2="1" y2="1"><stop offset="0" stop-color="#ffe9a4"/><stop offset="1" stop-color="#ffc93c"/></linearGradient></defs><path d="M0 2.2Q0 0 2.2 0H9.2Q10.4 0 11.2 .8L13.4 3H29.8Q32 3 32 5.2V10H0Z" fill="#f9b916"/><path d="M0 6H9.6Q10.6 6 11.4 5.2L12.8 3.8Q13.6 3 14.6 3H29.8Q32 3 32 5.2V22.8Q32 25 29.8 25H2.2Q0 25 0 22.8Z" fill="url(#fg22)"/><path d="M0.3 23.6Q.8 25 2.2 25H29.8Q31.2 25 31.7 23.6Q31 24.2 29.8 24.2H2.2Q1 24.2 .3 23.6Z" fill="#e9b42e"/></svg>
<svg style="position:absolute;left:816px;top:499px" width="18" height="18" viewBox="0 0 18 18"><circle cx="9" cy="9" r="9" fill="#0f8a4e"/><path d="M5 9.2L7.9 12L13 6.6" fill="none" stroke="#fff" stroke-width="1.9" stroke-linecap="round" stroke-linejoin="round"/></svg>
<svg style="position:absolute;left:818px;top:541px" width="32" height="24.5" viewBox="0 0 32 25"><defs><linearGradient id="fg23" x1="0" y1="0" x2="1" y2="1"><stop offset="0" stop-color="#ffe9a4"/><stop offset="1" stop-color="#ffc93c"/></linearGradient></defs><path d="M0 2.2Q0 0 2.2 0H9.2Q10.4 0 11.2 .8L13.4 3H29.8Q32 3 32 5.2V10H0Z" fill="#f9b916"/><path d="M0 6H9.6Q10.6 6 11.4 5.2L12.8 3.8Q13.6 3 14.6 3H29.8Q32 3 32 5.2V22.8Q32 25 29.8 25H2.2Q0 25 0 22.8Z" fill="url(#fg23)"/><path d="M0.3 23.6Q.8 25 2.2 25H29.8Q31.2 25 31.7 23.6Q31 24.2 29.8 24.2H2.2Q1 24.2 .3 23.6Z" fill="#e9b42e"/></svg>
<svg style="position:absolute;left:816px;top:555px" width="18" height="18" viewBox="0 0 18 18"><circle cx="9" cy="9" r="9" fill="#0f8a4e"/><path d="M5 9.2L7.9 12L13 6.6" fill="none" stroke="#fff" stroke-width="1.9" stroke-linecap="round" stroke-linejoin="round"/></svg>
<svg style="position:absolute;left:818px;top:597px" width="32" height="24.5" viewBox="0 0 32 25"><defs><linearGradient id="fg24" x1="0" y1="0" x2="1" y2="1"><stop offset="0" stop-color="#ffe9a4"/><stop offset="1" stop-color="#ffc93c"/></linearGradient></defs><path d="M0 2.2Q0 0 2.2 0H9.2Q10.4 0 11.2 .8L13.4 3H29.8Q32 3 32 5.2V10H0Z" fill="#f9b916"/><path d="M0 6H9.6Q10.6 6 11.4 5.2L12.8 3.8Q13.6 3 14.6 3H29.8Q32 3 32 5.2V22.8Q32 25 29.8 25H2.2Q0 25 0 22.8Z" fill="url(#fg24)"/><path d="M0.3 23.6Q.8 25 2.2 25H29.8Q31.2 25 31.7 23.6Q31 24.2 29.8 24.2H2.2Q1 24.2 .3 23.6Z" fill="#e9b42e"/></svg>
<svg style="position:absolute;left:816px;top:611px" width="18" height="18" viewBox="0 0 18 18"><circle cx="9" cy="9" r="9" fill="#0f8a4e"/><path d="M5 9.2L7.9 12L13 6.6" fill="none" stroke="#fff" stroke-width="1.9" stroke-linecap="round" stroke-linejoin="round"/></svg>
<svg style="position:absolute;left:818px;top:653px" width="32" height="24.5" viewBox="0 0 32 25"><defs><linearGradient id="fg25" x1="0" y1="0" x2="1" y2="1"><stop offset="0" stop-color="#ffe9a4"/><stop offset="1" stop-color="#ffc93c"/></linearGradient></defs><path d="M0 2.2Q0 0 2.2 0H9.2Q10.4 0 11.2 .8L13.4 3H29.8Q32 3 32 5.2V10H0Z" fill="#f9b916"/><path d="M0 6H9.6Q10.6 6 11.4 5.2L12.8 3.8Q13.6 3 14.6 3H29.8Q32 3 32 5.2V22.8Q32 25 29.8 25H2.2Q0 25 0 22.8Z" fill="url(#fg25)"/><path d="M0.3 23.6Q.8 25 2.2 25H29.8Q31.2 25 31.7 23.6Q31 24.2 29.8 24.2H2.2Q1 24.2 .3 23.6Z" fill="#e9b42e"/></svg>
<svg style="position:absolute;left:816px;top:667px" width="18" height="18" viewBox="0 0 18 18"><circle cx="9" cy="9" r="9" fill="#0f8a4e"/><path d="M5 9.2L7.9 12L13 6.6" fill="none" stroke="#fff" stroke-width="1.9" stroke-linecap="round" stroke-linejoin="round"/></svg>
<svg style="position:absolute;left:818px;top:709px" width="32" height="24.5" viewBox="0 0 32 25"><defs><linearGradient id="fg26" x1="0" y1="0" x2="1" y2="1"><stop offset="0" stop-color="#ffe9a4"/><stop offset="1" stop-color="#ffc93c"/></linearGradient></defs><path d="M0 2.2Q0 0 2.2 0H9.2Q10.4 0 11.2 .8L13.4 3H29.8Q32 3 32 5.2V10H0Z" fill="#f9b916"/><path d="M0 6H9.6Q10.6 6 11.4 5.2L12.8 3.8Q13.6 3 14.6 3H29.8Q32 3 32 5.2V22.8Q32 25 29.8 25H2.2Q0 25 0 22.8Z" fill="url(#fg26)"/><path d="M0.3 23.6Q.8 25 2.2 25H29.8Q31.2 25 31.7 23.6Q31 24.2 29.8 24.2H2.2Q1 24.2 .3 23.6Z" fill="#e9b42e"/></svg>
<svg style="position:absolute;left:816px;top:723px" width="18" height="18" viewBox="0 0 18 18"><circle cx="9" cy="9" r="9" fill="#0f8a4e"/><path d="M5 9.2L7.9 12L13 6.6" fill="none" stroke="#fff" stroke-width="1.9" stroke-linecap="round" stroke-linejoin="round"/></svg>
<svg style="position:absolute;left:818px;top:765px" width="32" height="24.5" viewBox="0 0 32 25"><defs><linearGradient id="fg27" x1="0" y1="0" x2="1" y2="1"><stop offset="0" stop-color="#ffe9a4"/><stop offset="1" stop-color="#ffc93c"/></linearGradient></defs><path d="M0 2.2Q0 0 2.2 0H9.2Q10.4 0 11.2 .8L13.4 3H29.8Q32 3 32 5.2V10H0Z" fill="#f9b916"/><path d="M0 6H9.6Q10.6 6 11.4 5.2L12.8 3.8Q13.6 3 14.6 3H29.8Q32 3 32 5.2V22.8Q32 25 29.8 25H2.2Q0 25 0 22.8Z" fill="url(#fg27)"/><path d="M0.3 23.6Q.8 25 2.2 25H29.8Q31.2 25 31.7 23.6Q31 24.2 29.8 24.2H2.2Q1 24.2 .3 23.6Z" fill="#e9b42e"/></svg>
<svg style="position:absolute;left:816px;top:779px" width="18" height="18" viewBox="0 0 18 18"><circle cx="9" cy="9" r="9" fill="#0f8a4e"/><path d="M5 9.2L7.9 12L13 6.6" fill="none" stroke="#fff" stroke-width="1.9" stroke-linecap="round" stroke-linejoin="round"/></svg>
<svg style="position:absolute;left:818px;top:821px" width="32" height="24.5" viewBox="0 0 32 25"><defs><linearGradient id="fg28" x1="0" y1="0" x2="1" y2="1"><stop offset="0" stop-color="#ffe9a4"/><stop offset="1" stop-color="#ffc93c"/></linearGradient></defs><path d="M0 2.2Q0 0 2.2 0H9.2Q10.4 0 11.2 .8L13.4 3H29.8Q32 3 32 5.2V10H0Z" fill="#f9b916"/><path d="M0 6H9.6Q10.6 6 11.4 5.2L12.8 3.8Q13.6 3 14.6 3H29.8Q32 3 32 5.2V22.8Q32 25 29.8 25H2.2Q0 25 0 22.8Z" fill="url(#fg28)"/><path d="M0.3 23.6Q.8 25 2.2 25H29.8Q31.2 25 31.7 23.6Q31 24.2 29.8 24.2H2.2Q1 24.2 .3 23.6Z" fill="#e9b42e"/></svg>
<svg style="position:absolute;left:816px;top:835px" width="18" height="18" viewBox="0 0 18 18"><circle cx="9" cy="9" r="9" fill="#0f8a4e"/><path d="M5 9.2L7.9 12L13 6.6" fill="none" stroke="#fff" stroke-width="1.9" stroke-linecap="round" stroke-linejoin="round"/></svg>
<svg style="position:absolute;left:821px;top:874px" width="26" height="35" viewBox="0 0 26 35"><path d="M.5 .5H16L25.5 10V34.5H.5Z" fill="#fff" stroke="#d4d4d4" stroke-width="1"/><path d="M16 .5V10H25.5" fill="#f4f4f4" stroke="#d4d4d4" stroke-width="1"/></svg>
<svg style="position:absolute;left:826px;top:886px" width="17" height="20" viewBox="0 0 17 20"><defs><linearGradient id="sn10" x1="0" y1="0" x2="0" y2="1"><stop offset="0" stop-color="#4a9cdc"/><stop offset="1" stop-color="#2a5cb4"/></linearGradient></defs><path d="M4 .5H16L14 3.6H6.4L4.4 7H11Q16 7 16 12.6Q16 19 10 19H2V15.6H9.6Q12.4 15.6 12.4 12.8Q12.4 10.2 9.6 10.2H0Z" fill="url(#sn10)"/></svg>
<svg style="position:absolute;left:816px;top:891px" width="18" height="18" viewBox="0 0 18 18"><circle cx="9" cy="9" r="9" fill="#0f8a4e"/><path d="M5 9.2L7.9 12L13 6.6" fill="none" stroke="#fff" stroke-width="1.9" stroke-linecap="round" stroke-linejoin="round"/></svg>
<svg style="position:absolute;left:821px;top:930px" width="26" height="35" viewBox="0 0 26 35"><path d="M.5 .5H16L25.5 10V34.5H.5Z" fill="#fff" stroke="#d4d4d4" stroke-width="1"/><path d="M16 .5V10H25.5" fill="#f4f4f4" stroke="#d4d4d4" stroke-width="1"/></svg>
<svg style="position:absolute;left:826px;top:942px" width="17" height="20" viewBox="0 0 17 20"><defs><linearGradient id="sn11" x1="0" y1="0" x2="0" y2="1"><stop offset="0" stop-color="#4a9cdc"/><stop offset="1" stop-color="#2a5cb4"/></linearGradient></defs><path d="M4 .5H16L14 3.6H6.4L4.4 7H11Q16 7 16 12.6Q16 19 10 19H2V15.6H9.6Q12.4 15.6 12.4 12.8Q12.4 10.2 9.6 10.2H0Z" fill="url(#sn11)"/></svg>
<svg style="position:absolute;left:816px;top:947px" width="18" height="18" viewBox="0 0 18 18"><circle cx="9" cy="9" r="9" fill="#0f8a4e"/><path d="M5 9.2L7.9 12L13 6.6" fill="none" stroke="#fff" stroke-width="1.9" stroke-linecap="round" stroke-linejoin="round"/></svg>
<svg style="position:absolute;left:821px;top:986px" width="26" height="35" viewBox="0 0 26 35"><path d="M.5 .5H16L25.5 10V34.5H.5Z" fill="#fff" stroke="#8c8c8c" stroke-width="1"/><path d="M16 .5V10H25.5" fill="#f4f4f4" stroke="#8c8c8c" stroke-width="1"/></svg>
<div style="position:absolute;left:817px;top:995px;width:17px;height:18px;background:#1f5fc6;"></div>
<div class="t" style="left:818.5px;top:996px;font:700 15px/15px 'Liberation Sans', sans-serif;color:#fff;transform:scaleX(.95)">W</div>
<div style="position:absolute;left:836px;top:999px;width:8px;height:1px;background:#4aa0ee;"></div>
<div style="position:absolute;left:836px;top:1002px;width:8px;height:1px;background:#9cc0ea;"></div>
<div style="position:absolute;left:836px;top:1004.5px;width:8px;height:1px;background:#9cc0ea;"></div>
<div style="position:absolute;left:836px;top:1007px;width:8px;height:1px;background:#2e62c0;"></div>
<svg style="position:absolute;left:816px;top:1003px" width="18" height="18" viewBox="0 0 18 18"><circle cx="9" cy="9" r="9" fill="#0f8a4e"/><path d="M5 9.2L7.9 12L13 6.6" fill="none" stroke="#fff" stroke-width="1.9" stroke-linecap="round" stroke-linejoin="round"/></svg>
<svg style="position:absolute;left:816px;top:1041px" width="36" height="36" viewBox="0 0 36 36"><defs><linearGradient id="np" x1="0" y1="0" x2="0" y2="1"><stop offset="0" stop-color="#fff"/><stop offset=".45" stop-color="#e8f0d8"/><stop offset="1" stop-color="#58c020"/></linearGradient></defs><path d="M1.5 3.5H19L26 10.5V32.5H1.5Z" fill="url(#np)" stroke="#8a8a8a" stroke-width="1"/><path d="M3 7.5H17M3 11H21M3 14.5H23" stroke="#c8d8e8" stroke-width="1"/><ellipse cx="12" cy="15.5" rx="5" ry="3.6" fill="#62c83a"/><circle cx="14" cy="12.3" r="2.2" fill="#fff" stroke="#333" stroke-width=".8"/><circle cx="17.6" cy="12.6" r="2" fill="#fff" stroke="#333" stroke-width=".8"/><path d="M8 20Q14 17 22 21" stroke="#3a6a18" stroke-width="1.2" fill="none"/><path d="M33.6 2L35 3L25 27L22.6 28.4L23 25.8Z" fill="#f0b020" stroke="#a06a10" stroke-width=".6"/><path d="M33.6 2L35 3L34.2 5L32.8 4Z" fill="#b03030"/></svg>
<svg style="position:absolute;left:816px;top:1059px" width="18" height="18" viewBox="0 0 18 18"><circle cx="9" cy="9" r="9" fill="#0f8a4e"/><path d="M5 9.2L7.9 12L13 6.6" fill="none" stroke="#fff" stroke-width="1.9" stroke-linecap="round" stroke-linejoin="round"/></svg>
<svg style="position:absolute;left:821px;top:1098px" width="26" height="35" viewBox="0 0 26 35"><path d="M.5 .5H16L25.5 10V34.5H.5Z" fill="#fff" stroke="#8c8c8c" stroke-width="1"/><path d="M16 .5V10H25.5" fill="#f4f4f4" stroke="#8c8c8c" stroke-width="1"/></svg>
<div style="position:absolute;left:817px;top:1107px;width:17px;height:18px;background:#0f7b72;"></div>
<div class="t" style="left:43.79px;top:97.72px;font:400 27.5px/27.5px 'Liberation Sans', sans-serif;color:#000;-webkit-text-stroke:0.22px #fff;transform:scaleX(1.0125)">C:\Users\David\Dropbox\David\2023_2024\Math 341 Summer 2024</div>
<div class="t" style="left:62.56px;top:154.72px;font:400 27.5px/27.5px 'Liberation Sans', sans-serif;color:#000;-webkit-text-stroke:0.22px #fff;transform:scaleX(0.9695)">Rapid Access</div>
<div class="t" style="left:62.97px;top:210.72px;font:400 27.5px/27.5px 'Liberation Sans', sans-serif;color:#0b4fa8;-webkit-text-stroke:0.22px #f4f7fc;transform:scaleX(0.9344)">This PC</div>
<div class="t" style="left:88.65px;top:266.72px;font:400 27.5px/27.5px 'Liberation Sans', sans-serif;color:#0b4fa8;-webkit-text-stroke:0.22px #f4f7fc;transform:scaleX(0.9754)">Links</div>
<div class="t" style="left:88.56px;top:322.72px;font:400 27.5px/27.5px 'Liberation Sans', sans-serif;color:#0b4fa8;-webkit-text-stroke:0.22px #f4f7fc;transform:scaleX(1.0184)">Desktop</div>
<div class="t" style="left:88.56px;top:378.72px;font:400 27.5px/27.5px 'Liberation Sans', sans-serif;color:#0b4fa8;-webkit-text-stroke:0.22px #f4f7fc;transform:scaleX(1.0206)">Documents</div>
<div class="t" style="left:88.58px;top:434.72px;font:400 27.5px/27.5px 'Liberation Sans', sans-serif;color:#0b4fa8;-webkit-text-stroke:0.22px #f4f7fc;transform:scaleX(1.0120)">Downloads</div>
<div class="t" style="left:88.59px;top:490.72px;font:400 27.5px/27.5px 'Liberation Sans', sans-serif;color:#0b4fa8;-webkit-text-stroke:0.22px #f4f7fc;transform:scaleX(1.0045)">David</div>
<div class="t" style="left:89.90px;top:546.72px;font:400 27.5px/27.5px 'Liberation Sans', sans-serif;color:#000;-webkit-text-stroke:0.22px #fff;transform:scaleX(0.9687)">Windows (C:)</div>
<div class="t" style="left:116.60px;top:602.72px;font:400 27.5px/27.5px 'Liberation Sans', sans-serif;color:#000;-webkit-text-stroke:0.22px #fff;transform:scaleX(0.9688)">$WinREAgent</div>
<div class="t" style="left:114.58px;top:658.72px;font:400 27.5px/27.5px 'Liberation Sans', sans-serif;color:#000;-webkit-text-stroke:0.22px #fff;transform:scaleX(1.0103)">Duet, Inc</div>
<div class="t" style="left:114.42px;top:714.72px;font:400 27.5px/27.5px 'Liberation Sans', sans-serif;color:#000;-webkit-text-stroke:0.22px #fff;transform:scaleX(1.0424)">home</div>
<div class="t" style="left:114.29px;top:770.72px;font:400 27.5px/27.5px 'Liberation Sans', sans-serif;color:#000;-webkit-text-stroke:0.22px #fff;transform:scaleX(1.1037)">hp</div>
<div class="t" style="left:114.58px;top:826.72px;font:400 27.5px/27.5px 'Liberation Sans', sans-serif;color:#000;-webkit-text-stroke:0.22px #fff;transform:scaleX(0.9588)">HP_LaserJet_Pro_MFP_M426f-M427f</div>
<div class="t" style="left:115.50px;top:882.72px;font:400 27.5px/27.5px 'Liberation Sans', sans-serif;color:#000;-webkit-text-stroke:0.22px #fff;transform:scaleX(1.0033)">OneDriveTemp</div>
<div class="t" style="left:114.57px;top:938.72px;font:400 27.5px/27.5px 'Liberation Sans', sans-serif;color:#000;-webkit-text-stroke:0.22px #fff;transform:scaleX(0.9673)">PerfLogs</div>
<div class="t" style="left:114.52px;top:994.72px;font:400 27.5px/27.5px 'Liberation Sans', sans-serif;color:#000;-webkit-text-stroke:0.22px #fff;transform:scaleX(0.9917)">Program Files</div>
<div class="t" style="left:114.54px;top:1050.72px;font:400 27.5px/27.5px 'Liberation Sans', sans-serif;color:#000;-webkit-text-stroke:0.22px #b2f3af;transform:scaleX(0.9815)">Program Files (x86)</div>
<div class="t" style="left:810.77px;top:153.72px;font:400 27.5px/27.5px 'Liberation Sans', sans-serif;color:#000;-webkit-text-stroke:0.22px #f0f0f0;transform:scaleX(0.9321)">The LaTe...</div>
<div class="t" style="left:1022.80px;top:153.72px;font:400 27.5px/27.5px 'Liberation Sans', sans-serif;color:#000;-webkit-text-stroke:0.22px #f0f0f0;transform:scaleX(1.0015)">Math-341...</div>
<div class="t" style="left:1234.16px;top:153.72px;font:400 27.5px/27.5px 'Liberation Sans', sans-serif;color:#000;-webkit-text-stroke:0.22px #f0f0f0;transform:scaleX(0.9712)">Sector Pr...</div>
<div class="t" style="left:1446.41px;top:149.07px;font:700 28.5px/28.5px 'Liberation Sans', sans-serif;color:#fff;transform:scaleX(1.0473)">Math 3...</div>
<div class="t" style="left:1088.45px;top:203.87px;font:700 28.5px/28.5px 'Liberation Sans', sans-serif;color:#fff;transform:scaleX(0.9739)">Dropbox</div>
<div class="t" style="left:1263.91px;top:203.87px;font:700 28.5px/28.5px 'Liberation Sans', sans-serif;color:#fff;transform:scaleX(0.9932)">David</div>
<div class="t" style="left:1400.82px;top:203.87px;font:700 28.5px/28.5px 'Liberation Sans', sans-serif;color:#fff;transform:scaleX(0.9768)">2023_2024</div>
<div class="t" style="left:1601.98px;top:203.87px;font:700 28.5px/28.5px 'Liberation Sans', sans-serif;color:#fff;transform:scaleX(1.0118)">Math 341</div>
<div class="t" style="left:1658.34px;top:153.72px;font:400 27.5px/27.5px 'Liberation Sans', sans-serif;color:#000;-webkit-text-stroke:0.22px #f0f0f0;transform:scaleX(0.9806)">Secto</div>
<div class="t" style="left:1549.71px;top:-15.28px;font:400 27.5px/27.5px 'Liberation Sans', sans-serif;color:#000;-webkit-text-stroke:0.22px #f0f0f0;transform:scaleX(0.8857)">on</div>
<div class="t" style="left:780.40px;top:259.49px;font:400 26px/26px 'Liberation Sans', sans-serif;color:#47586e;-webkit-text-stroke:0.22px #fff;transform:scaleX(1.1286)">#</div>
<div class="t" style="left:816.97px;top:259.72px;font:400 27.5px/27.5px 'Liberation Sans', sans-serif;color:#3d5878;-webkit-text-stroke:0.22px #fff;transform:scaleX(1.0157)">Name</div>
<div class="t" style="left:856.50px;top:319.72px;font:400 27.5px/27.5px 'Liberation Sans', sans-serif;color:#66421f;-webkit-text-stroke:0.22px #f9f6f0;transform:scaleX(1.0382)">Administration</div>
<div class="t" style="left:855.56px;top:375.72px;font:400 27.5px/27.5px 'Liberation Sans', sans-serif;color:#66421f;-webkit-text-stroke:0.22px #f4f7fc;transform:scaleX(0.9210)">Exams</div>
<div class="t" style="left:855.27px;top:431.72px;font:400 27.5px/27.5px 'Liberation Sans', sans-serif;color:#66421f;-webkit-text-stroke:0.22px #f9f6f0;transform:scaleX(1.0169)">homework_solutions</div>
<div class="t" style="left:855.29px;top:487.72px;font:400 27.5px/27.5px 'Liberation Sans', sans-serif;color:#66421f;-webkit-text-stroke:0.22px #f4f7fc;transform:scaleX(1.0065)">LaTeX documentation</div>
<div class="t" style="left:855.27px;top:543.72px;font:400 27.5px/27.5px 'Liberation Sans', sans-serif;color:#1c1c10;-webkit-text-stroke:0.22px #b2f3af;transform:scaleX(1.0149)">Math 341 Summer 2024 - Website</div>
<div class="t" style="left:855.27px;top:599.72px;font:400 27.5px/27.5px 'Liberation Sans', sans-serif;color:#66421f;-webkit-text-stroke:0.22px #f4f7fc;transform:scaleX(1.0144)">Math-341-Solutions-Su2024</div>
<div class="t" style="left:855.25px;top:655.72px;font:400 27.5px/27.5px 'Liberation Sans', sans-serif;color:#66421f;-webkit-text-stroke:0.22px #f9f6f0;transform:scaleX(1.0231)">Mathematica demonstrations</div>
<div class="t" style="left:856.27px;top:711.72px;font:400 27.5px/27.5px 'Liberation Sans', sans-serif;color:#66421f;-webkit-text-stroke:0.22px #f4f7fc;transform:scaleX(1.0261)">other books</div>
<div class="t" style="left:855.25px;top:767.72px;font:400 27.5px/27.5px 'Liberation Sans', sans-serif;color:#66421f;-webkit-text-stroke:0.22px #f9f6f0;transform:scaleX(1.0238)">Understanding Analysis 2010 - Abbott - 1st Edition</div>
<div class="t" style="left:855.25px;top:823.72px;font:400 27.5px/27.5px 'Liberation Sans', sans-serif;color:#66421f;-webkit-text-stroke:0.22px #f4f7fc;transform:scaleX(1.0267)">Understanding Analysis 2015 - Abbott - 2nd Edition</div>
<div class="t" style="left:856.28px;top:879.72px;font:400 27.5px/27.5px 'Liberation Sans', sans-serif;color:#8a2a62;-webkit-text-stroke:0.22px #fdfdfd;transform:scaleX(1.0240)">2pm.png</div>
<div class="t" style="left:856.28px;top:935.72px;font:400 27.5px/27.5px 'Liberation Sans', sans-serif;color:#8a2a62;-webkit-text-stroke:0.22px #f4f7fc;transform:scaleX(1.0240)">3pm.png</div>
<div class="t" style="left:855.20px;top:991.72px;font:400 27.5px/27.5px 'Liberation Sans', sans-serif;color:#000;-webkit-text-stroke:0.22px #fdfdfd;transform:scaleX(0.9996)">Intrinsic Value.docx</div>
<div class="t" style="left:855.16px;top:1047.72px;font:400 27.5px/27.5px 'Liberation Sans', sans-serif;color:#2e9e50;-webkit-text-stroke:0.22px #f4f7fc;transform:scaleX(1.0142)">Intrinsic Value.txt</div>
<div style="position:absolute;left:748px;width:49px;text-align:right;top:319.7px;font:400 27.5px/27.5px 'Liberation Sans', sans-serif;color:#8f8f8f">1</div>
<div style="position:absolute;left:748px;width:49px;text-align:right;top:375.7px;font:400 27.5px/27.5px 'Liberation Sans', sans-serif;color:#8f8f8f">2</div>
<div style="position:absolute;left:748px;width:49px;text-align:right;top:431.7px;font:400 27.5px/27.5px 'Liberation Sans', sans-serif;color:#8f8f8f">3</div>
<div style="position:absolute;left:748px;width:49px;text-align:right;top:487.7px;font:400 27.5px/27.5px 'Liberation Sans', sans-serif;color:#8f8f8f">4</div>
<div style="position:absolute;left:748px;width:49px;text-align:right;top:543.7px;font:400 27.5px/27.5px 'Liberation Sans', sans-serif;color:#8f8f8f">5</div>
<div style="position:absolute;left:748px;width:49px;text-align:right;top:599.7px;font:400 27.5px/27.5px 'Liberation Sans', sans-serif;color:#8f8f8f">6</div>
<div style="position:absolute;left:748px;width:49px;text-align:right;top:655.7px;font:400 27.5px/27.5px 'Liberation Sans', sans-serif;color:#8f8f8f">7</div>
<div style="position:absolute;left:748px;width:49px;text-align:right;top:711.7px;font:400 27.5px/27.5px 'Liberation Sans', sans-serif;color:#8f8f8f">8</div>
<div style="position:absolute;left:748px;width:49px;text-align:right;top:767.7px;font:400 27.5px/27.5px 'Liberation Sans', sans-serif;color:#8f8f8f">9</div>
<div style="position:absolute;left:748px;width:49px;text-align:right;top:823.7px;font:400 27.5px/27.5px 'Liberation Sans', sans-serif;color:#8f8f8f">10</div>
<div style="position:absolute;left:748px;width:49px;text-align:right;top:879.7px;font:400 27.5px/27.5px 'Liberation Sans', sans-serif;color:#8f8f8f">11</div>
<div style="position:absolute;left:748px;width:49px;text-align:right;top:935.7px;font:400 27.5px/27.5px 'Liberation Sans', sans-serif;color:#8f8f8f">12</div>
<div style="position:absolute;left:748px;width:49px;text-align:right;top:991.7px;font:400 27.5px/27.5px 'Liberation Sans', sans-serif;color:#8f8f8f">13</div>
<div style="position:absolute;left:748px;width:49px;text-align:right;top:1047.7px;font:400 27.5px/27.5px 'Liberation Sans', sans-serif;color:#8f8f8f">14</div>
<div style="position:absolute;left:748px;width:49px;text-align:right;top:1103.7px;font:400 27.5px/27.5px 'Liberation Sans', sans-serif;color:#8f8f8f">15</div>
<div class="t" style="left:1727.5px;top:153.7px;font:400 27.5px/27.5px 'Liberation Sans', sans-serif;color:#000">r Pr...</div>
<div class="t" style="left:1734px;top:204.7px;font:700 27.5px/27.5px 'Liberation Sans', sans-serif;color:#fff">Summer 2024</div>
<div class="t" style="left:856px;top:1103.7px;font:400 27.5px/27.5px 'Liberation Sans', sans-serif;color:#000;transform:scaleX(.95)">Safe Scorecard.csv</div>
</div></body></html>
